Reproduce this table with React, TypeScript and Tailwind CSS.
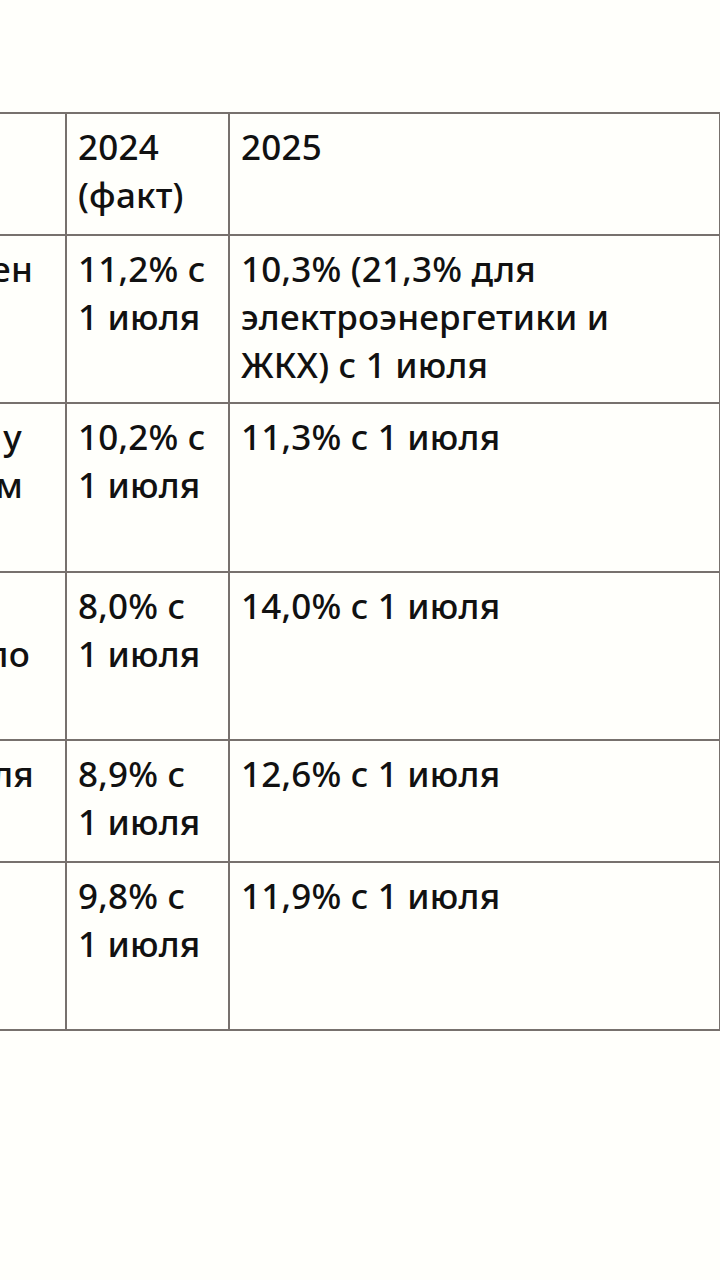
const rows = [
  {
    h: "h-[168px]",
    label: [{ text: "цен", pr: "pr-[32px]" }],
    fact: ["11,2% с", "1 июля"],
    plan: ["10,3% (21,3% для", "электроэнергетики и", "ЖКХ) с 1 июля"],
  },
  {
    h: "h-[169px]",
    label: [
      { text: "у", pr: "pr-[43px]" },
      { text: "потребителям", pr: "pr-[42px]" },
    ],
    fact: ["10,2% с", "1 июля"],
    plan: ["11,3% с 1 июля"],
  },
  {
    h: "h-[168px]",
    label: [
      { text: "\u00a0", pr: "pr-[36px]" },
      { text: "тепло", pr: "pr-[35px]" },
    ],
    fact: ["8,0% с", "1 июля"],
    plan: ["14,0% с 1 июля"],
  },
  {
    h: "h-[122px]",
    label: [{ text: "для", pr: "pr-[31px]" }],
    fact: ["8,9% с", "1 июля"],
    plan: ["12,6% с 1 июля"],
  },
  {
    h: "h-[168px]",
    label: [],
    fact: ["9,8% с", "1 июля"],
    plan: ["11,9% с 1 июля"],
  },
]

function Lines({ lines }: { lines: string[] }) {
  return (
    <>
      {lines.map((l, i) => (
        <div key={i} className="whitespace-nowrap">
          {l}
        </div>
      ))}
    </>
  )
}

export default function App() {
  return (
    <div
      className="min-h-screen w-[720px] overflow-hidden bg-[#fffffb] pt-[112px] text-[35px] font-medium leading-[48px] tracking-[0.2px] text-[#111]"
      style={{ fontFamily: '"Noto Sans", "Open Sans", sans-serif' }}
    >
      <table className="ml-[-235px] w-[954px] table-fixed border-collapse">
        <colgroup>
          <col className="w-[300px]" />
          <col className="w-[163px]" />
          <col className="w-[491px]" />
        </colgroup>
        <thead>
          <tr className="h-[122px]">
            <th className="border-2 border-[#77716d] p-0" />
            <th className="border-2 border-[#77716d] pl-[11px] pr-1 pt-[9px] pb-0 text-left align-top font-medium">
              <Lines lines={["2024", "(факт)"]} />
            </th>
            <th className="border-2 border-[#77716d] pl-[11px] pr-1 pt-[9px] pb-0 text-left align-top font-medium">
              <Lines lines={["2025"]} />
            </th>
          </tr>
        </thead>
        <tbody>
          {rows.map((r, i) => (
            <tr key={i} className={r.h}>
              <td className="border-2 border-[#77716d] p-0 pt-[9px] align-top">
                {r.label.map((l, j) => (
                  <div key={j} className={`whitespace-nowrap text-right ${l.pr}`}>
                    {l.text}
                  </div>
                ))}
              </td>
              <td className="border-2 border-[#77716d] pl-[11px] pr-1 pt-[9px] pb-0 align-top">
                <Lines lines={r.fact} />
              </td>
              <td className="border-2 border-[#77716d] pl-[11px] pr-1 pt-[9px] pb-0 align-top">
                <Lines lines={r.plan} />
              </td>
            </tr>
          ))}
        </tbody>
      </table>
    </div>
  )
}
